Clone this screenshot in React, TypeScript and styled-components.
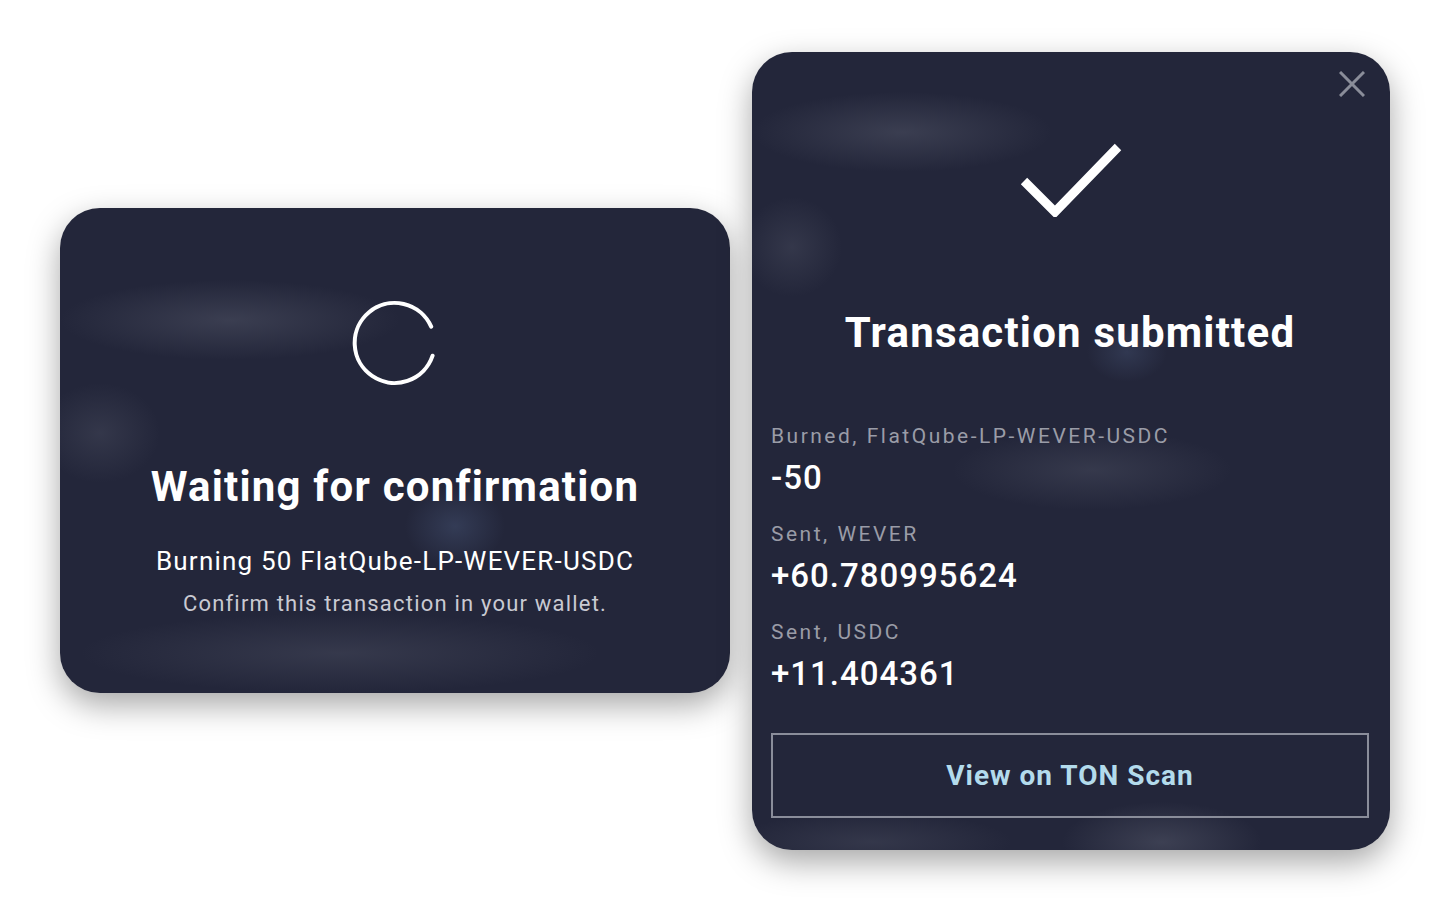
import styled, { createGlobalStyle } from "styled-components";

const GlobalStyle = createGlobalStyle`
  html, body {
    margin: 0;
    padding: 0;
    background: #ffffff;
  }
  body {
    font-family: Roboto, "Liberation Sans", sans-serif;
  }
`;

const rows = [
  { label: "Burned, FlatQube-LP-WEVER-USDC", value: "-50" },
  { label: "Sent, WEVER", value: "+60.780995624" },
  { label: "Sent, USDC", value: "+11.404361" },
];

export default function App() {
  return (
    <>
      <GlobalStyle />
      <Page>
        <WaitingCard>
          <Spinner viewBox="0 0 88 88">
            <path
              d="M80.2 28.6 A40 40 0 1 0 81.6 57.7"
              fill="none"
              stroke="#ffffff"
              strokeWidth="4"
              strokeLinecap="round"
            />
          </Spinner>
          <Heading>Waiting for confirmation</Heading>
          <Subtitle>Burning 50 FlatQube-LP-WEVER-USDC</Subtitle>
          <Hint>Confirm this transaction in your wallet.</Hint>
        </WaitingCard>

        <SubmittedCard>
          <CloseButton aria-label="Close">
            <svg width="26" height="26" viewBox="0 0 26 26">
              <path
                d="M1 1 L25 25 M25 1 L1 25"
                stroke="#8a8d99"
                strokeWidth="3"
                fill="none"
              />
            </svg>
          </CloseButton>
          <Check viewBox="0 0 102 76">
            <path
              d="M4 40 L35 71 L98 6"
              fill="none"
              stroke="#ffffff"
              strokeWidth="9"
            />
          </Check>
          <Heading $top={91}>Transaction submitted</Heading>
          <Details>
            {rows.map((r) => (
              <Row key={r.label}>
                <Label>{r.label}</Label>
                <Value>{r.value}</Value>
              </Row>
            ))}
          </Details>
          <ScanButton>View on TON Scan</ScanButton>
        </SubmittedCard>
      </Page>
    </>
  );
}

const Page = styled.div`
  width: 1450px;
  height: 918px;
  box-sizing: border-box;
  padding: 52px 0 0 60px;
  display: flex;
  align-items: flex-start;
  gap: 22px;
`;

const Card = styled.div`
  position: relative;
  box-sizing: border-box;
  border-radius: 40px;
  background-color: #23263a;
  box-shadow: 0 12px 32px rgba(0, 0, 0, 0.35);
  display: flex;
  flex-direction: column;
  overflow: hidden;
`;

const WaitingCard = styled(Card)`
  width: 670px;
  height: 485px;
  margin-top: 156px;
  align-items: center;
  padding-top: 90px;
  background-image: radial-gradient(
      ellipse 170px 40px at 170px 112px,
      rgba(120, 124, 140, 0.28),
      transparent
    ),
    radial-gradient(
      ellipse 60px 50px at 40px 225px,
      rgba(120, 124, 140, 0.2),
      transparent
    ),
    radial-gradient(
      ellipse 50px 40px at 395px 318px,
      rgba(90, 110, 150, 0.3),
      transparent
    ),
    radial-gradient(
      ellipse 260px 40px at 280px 445px,
      rgba(120, 124, 140, 0.22),
      transparent
    );
`;

const SubmittedCard = styled(Card)`
  width: 638px;
  height: 798px;
  align-items: center;
  padding: 92px 21px 32px 19px;
  background-image: radial-gradient(
      ellipse 150px 40px at 150px 80px,
      rgba(120, 124, 140, 0.28),
      transparent
    ),
    radial-gradient(
      ellipse 50px 50px at 40px 195px,
      rgba(120, 124, 140, 0.2),
      transparent
    ),
    radial-gradient(
      ellipse 40px 30px at 375px 300px,
      rgba(90, 110, 150, 0.25),
      transparent
    ),
    radial-gradient(
      ellipse 140px 40px at 340px 418px,
      rgba(120, 124, 140, 0.22),
      transparent
    ),
    radial-gradient(
      ellipse 100px 40px at 410px 790px,
      rgba(120, 124, 140, 0.3),
      transparent
    ),
    radial-gradient(
      ellipse 140px 30px at 120px 790px,
      rgba(120, 124, 140, 0.2),
      transparent
    );
`;

const Spinner = styled.svg`
  width: 88px;
  height: 88px;
  flex-shrink: 0;
`;

const Check = styled.svg`
  width: 102px;
  height: 76px;
  flex-shrink: 0;
  margin-left: 2px;
  margin-top: -3px;
`;

const CloseButton = styled.button`
  position: absolute;
  top: 19px;
  right: 25px;
  width: 26px;
  height: 26px;
  padding: 0;
  border: none;
  background: none;
  display: flex;
  cursor: pointer;
`;

const Heading = styled.h2<{ $top?: number }>`
  margin: ${(p) => p.$top ?? 76}px 0 0;
  font-size: 42px;
  line-height: 50px;
  font-weight: 700;
  letter-spacing: 1.2px;
  color: #ffffff;
  text-align: center;
`;

const Subtitle = styled.p`
  margin: 34px 0 0;
  font-size: 26px;
  line-height: 30px;
  letter-spacing: 1.2px;
  color: #ffffff;
`;

const Hint = styled.p`
  margin: 15px 0 0;
  font-size: 22px;
  line-height: 26px;
  letter-spacing: 1.2px;
  color: #c9cad2;
`;

const Details = styled.div`
  align-self: stretch;
  margin-top: 65px;
  display: flex;
  flex-direction: column;
  gap: 23px;
`;

const Row = styled.div`
  display: flex;
  flex-direction: column;
  gap: 9px;
`;

const Label = styled.span`
  font-size: 21px;
  line-height: 26px;
  letter-spacing: 2.5px;
  color: #9a9ca7;
`;

const Value = styled.span`
  font-size: 33px;
  line-height: 40px;
  font-weight: 500;
  letter-spacing: 1px;
  color: #ffffff;
`;

const ScanButton = styled.button`
  align-self: stretch;
  margin-top: 39px;
  height: 86px;
  box-sizing: border-box;
  border: 2px solid #8a8d9a;
  background: transparent;
  font-family: inherit;
  font-size: 28px;
  font-weight: 700;
  letter-spacing: 1px;
  color: #b3dbec;
  cursor: pointer;
`;
